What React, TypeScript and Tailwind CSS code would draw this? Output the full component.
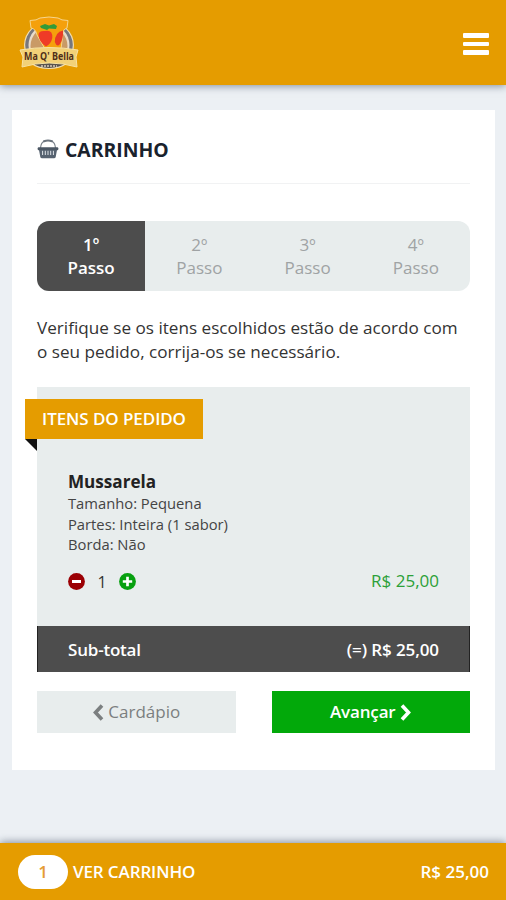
import type { ReactNode } from "react";

const STEPS = ["1º", "2º", "3º", "4º"];
const DETAILS = ["Tamanho: Pequena", "Partes: Inteira (1 sabor)", "Borda: Não"];

function Logo() {
  return (
    <svg width="60" height="58" viewBox="0 0 60 58" className="block overflow-visible">
      <ellipse cx="30" cy="31" rx="25" ry="23.5" fill="#f3dfb0" />
      <ellipse cx="30" cy="31" rx="23.8" ry="22.5" fill="#77777c" />
      <ellipse cx="30" cy="31" rx="20.5" ry="20.5" fill="#e8dccb" />
      <ellipse cx="30" cy="32" rx="18.5" ry="19" fill="#c99a66" />
      <path d="M11 6.5Q18 6.5 21 4Q30 2 39 4Q42 6.5 49 6.5L48 14Q44 15 44 19L42 35L26 35L18 21Q17 15 12 14Z" fill="#f5a00c" stroke="#f6d58c" strokeWidth="1" />
      <path d="M19.5 21Q19.5 16.5 26 17Q34 15.5 33.3 24Q32 30 27 32.5Q20 28 19.5 21Z" fill="#ef3b27" />
      <path d="M44 16.5Q36 18 35.8 28Q38 34 41 30Q44.5 25 44 16.5Z" fill="#e93a25" />
      <path d="M21 12L26 10L30 11.5L35 10L38 12L37 15L30 14.5L28 16L22 14Z" fill="#339b38" />
      <path d="M12 49Q30 43 48 49Q41 54.5 30 54.5Q19 54.5 12 49Z" fill="#57524f" stroke="#f3dfb0" strokeWidth="1.2" />
      <path d="M1 36Q30 31 59 36L57 43L58 53Q30 45 3 53L4 43Z" fill="#f2d178" stroke="#f8e3a3" strokeWidth="1" />
      <text x="30" y="45.5" textAnchor="middle" textLength="50" lengthAdjust="spacingAndGlyphs" fontSize="10" fontWeight="700" fill="#4f2e18" fontFamily="Open Sans, sans-serif">
        Ma Q' Bella
      </text>
      <path d="M22 52H38" stroke="#d9cdbb" strokeWidth="1.5" strokeDasharray="2 1" />
    </svg>
  );
}

function BasketIcon() {
  return (
    <svg width="22" height="20" viewBox="0 0 22 20" fill="none" className="-mt-[2px] block">
      <path d="M3.5 9Q4 3.5 7 2.5M18.5 9Q18 3.5 15 2.5" stroke="#7b838c" strokeWidth="1.2" />
      <path d="M7 2.2Q11 0.8 15 2.2" stroke="#6a737d" strokeWidth="2" strokeLinecap="round" />
      <rect x="0.7" y="8.3" width="20.6" height="3" rx="1" fill="#4b5764" />
      <path d="M2 11H20L18.7 18Q18.4 19.2 17 19.2H5Q3.6 19.2 3.3 18Z" fill="#566270" />
      <path d="M5.6 11.8V16M8.3 11.8V16M11 11.8V16M13.7 11.8V16M16.4 11.8V16" stroke="#dfe4e8" strokeWidth="1" />
    </svg>
  );
}

function RoundButton({ color, children }: { color: string; children: ReactNode }) {
  return (
    <button type="button" className="-mt-px block">
      <svg width="17" height="17" viewBox="0 0 17 17" className="block">
        <circle cx="8.5" cy="8.5" r="8.4" fill={color} />
        {children}
      </svg>
    </button>
  );
}

function Chevron({ d }: { d: string }) {
  return (
    <svg width="12" height="17" viewBox="0 0 12 17" fill="none" stroke="currentColor" strokeWidth="3.6" className="block">
      <path d={d} />
    </svg>
  );
}

export default function App() {
  return (
    <div className="flex h-[900px] w-[506px] flex-col overflow-hidden bg-[#ecf0f4] font-['Open_Sans',sans-serif] text-[#333]">
      <header className="flex h-[85px] shrink-0 items-center justify-between bg-[#e59c00] pr-[17px] pl-[19px] shadow-[0_1px_8px_rgba(60,75,95,0.6)]">
        <Logo />
        <button type="button" className="mt-[3px] flex flex-col gap-[4px]">
          <span className="h-[4.5px] w-[26px] rounded-[1px] bg-white" />
          <span className="h-[4.5px] w-[26px] rounded-[1px] bg-white" />
          <span className="h-[4.5px] w-[26px] rounded-[1px] bg-white" />
        </button>
      </header>

      <main className="mt-[25px] mr-[11px] ml-[12px] h-[660px] shrink-0 bg-white px-[25px]">
        <div className="flex h-[74px] items-center gap-[6px] border-b border-[#f1f2f3] pt-[7px]">
          <BasketIcon />
          <h1 className="text-[19.4px] font-bold text-[#1a222d]">CARRINHO</h1>
        </div>

        <ol className="mt-[37px] grid h-[70px] grid-cols-4 overflow-hidden rounded-[12px] bg-[#e8eded] text-center text-[17px] leading-[23.5px] text-[#9fa3a4]">
          {STEPS.map((step, i) => (
            <li
              key={step}
              className={i === 0 ? "bg-[#4d4d4d] pt-[11.5px] font-semibold text-white" : "pt-[11.5px]"}
            >
              {step}
              <br />
              Passo
            </li>
          ))}
        </ol>

        <p className="mt-[25px] text-[17.14px] leading-[23.5px] whitespace-nowrap">
          Verifique se os itens escolhidos estão de acordo com
          <br />o seu pedido, corrija-os se necessário.
        </p>

        <section className="mt-[24px] h-[285px] bg-[#e8eded] pt-[12px]">
          <div className="-ml-[12px] w-[178px]">
            <h2 className="flex h-[40px] items-center justify-center bg-[#e59c00] text-[17px] font-semibold tracking-[-0.08px] text-white">
              ITENS DO PEDIDO
            </h2>
            <svg width="12" height="12" viewBox="0 0 12 12" className="block">
              <path d="M0 0H12V12Z" fill="#111" />
            </svg>
          </div>
          <div className="h-[175px] px-[31px] pt-[19px]">
            <h3 className="text-[17.1px] leading-[23px] font-bold text-[#222]">Mussarela</h3>
            <ul className="text-[14.75px] leading-[20.7px] text-[#444]">
              {DETAILS.map((line) => (
                <li key={line}>{line}</li>
              ))}
            </ul>
            <div className="mt-[15px] flex h-[24px] items-center">
              <RoundButton color="#9b0004">
                <path d="M4 8.5H13" stroke="#fff" strokeWidth="3" />
              </RoundButton>
              <span className="w-[34px] text-center text-[16px]">1</span>
              <RoundButton color="#07a010">
                <path d="M3.8 8.5H13.2M8.5 3.8V13.2" stroke="#fff" strokeWidth="2.7" />
              </RoundButton>
              <span className="-mt-[2px] ml-auto text-[17px] text-[#2ca038]">R$ 25,00</span>
            </div>
          </div>
          <div className="flex h-[46px] items-center justify-between border-x border-[#222] bg-[#4d4d4d] px-[30px] pt-px text-[17px] font-semibold tracking-[-0.2px] text-white">
            <span>Sub-total</span>
            <span className="tracking-[-0.1px]">(=) R$ 25,00</span>
          </div>
        </section>

        <div className="mt-[19px] grid grid-cols-2 gap-[36px] text-[17px]">
          <button type="button" className="flex h-[42px] items-center justify-center gap-[4px] bg-[#e8eded] text-[#7b7f80]">
            <Chevron d="M10 1.5L3.5 8.5L10 15.5" />
            Cardápio
          </button>
          <button type="button" className="flex h-[42px] items-center justify-center gap-[4px] bg-[#02a90a] font-semibold tracking-[-0.15px] text-white">
            Avançar
            <Chevron d="M2 1.5L8.5 8.5L2 15.5" />
          </button>
        </div>
      </main>

      <footer className="mt-auto flex h-[57px] shrink-0 items-center bg-[#e59c00] pr-[17px] pl-[18px] text-[17px] font-semibold tracking-[-0.12px] text-white shadow-[0_-1px_8px_rgba(60,75,95,0.6)]">
        <span className="flex h-[34px] w-[50px] items-center justify-center rounded-full bg-white text-[#e59c35]">1</span>
        <span className="ml-[5px]">VER CARRINHO</span>
        <span className="ml-auto tracking-normal">R$ 25,00</span>
      </footer>
    </div>
  );
}
